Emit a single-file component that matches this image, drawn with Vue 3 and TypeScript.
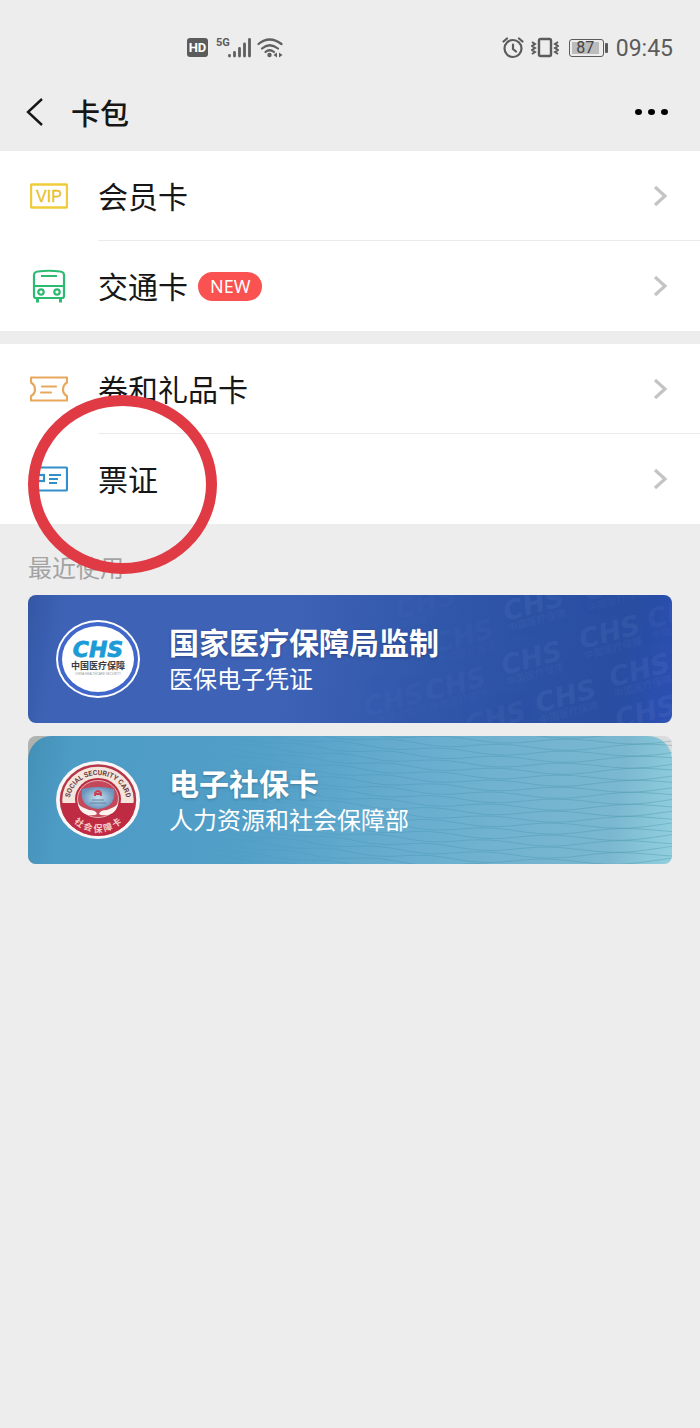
<script setup lang="ts">
interface Row {
  id: string
  label: string
  badge?: string
  marked?: boolean
}

const groups: Row[][] = [
  [
    { id: 'vip', label: '会员卡' },
    { id: 'bus', label: '交通卡', badge: 'NEW' },
  ],
  [
    { id: 'coupon', label: '券和礼品卡' },
    { id: 'ticket', label: '票证', marked: true },
  ],
]

// Watermark positions and strength across the medical insurance card
const marks: [number, number, number][] = [
  [370, 24, 0.4], [478, 26, 0.9], [558, 6, 0.7], [408, 58, 0.5], [476, 80, 0.9],
  [554, 54, 1], [584, 92, 1], [400, 106, 0.7], [338, 122, 0.4], [440, 140, 0.7],
  [510, 118, 1], [590, 134, 1], [622, 34, 0.7],
]

// Interlaced wave lines that open up towards the right edge
function wave(index: number): string {
  const base = -60 + index * 6
  const side = index % 2 ? 1 : -1
  const points: string[] = []
  for (let x = 150; x <= 648; x += 6) {
    const t = (x - 150) / 498
    const y = base + t * 74 - 46 * t * t + side * (1 + 2 * t) * Math.sin(x / (8 + 5 * t) + index * 0.05)
    points.push(`${x} ${y.toFixed(1)}`)
  }
  return 'M' + points.join('L')
}
const waves = Array.from({ length: 34 }, (_, i) => wave(i))
</script>

<template>
  <div class="page">
    <div class="status">
      <div class="status-left">
        <svg width="21" height="20" viewBox="0 0 21 20" aria-hidden="true">
          <rect width="21" height="19" rx="3" fill="#5b5b5b" />
          <text x="10.5" y="14" text-anchor="middle" class="hd-text">HD</text>
        </svg>
        <span class="net">5G</span>
        <svg width="24" height="20" viewBox="0 0 24 20" aria-hidden="true">
          <path d="M1.500 17.500v.5M6.500 14.500v3.500M11.500 10.500v7.500M16.500 6v12M21.500 1.500v16.500" stroke="#5f5f5f" stroke-width="2.800" stroke-linecap="round" />
        </svg>
        <svg class="wifi" width="27" height="20" viewBox="0 0 27 20" fill="none" stroke="#5f5f5f" stroke-width="2.2" stroke-linecap="round" aria-hidden="true">
          <path d="M1.5 6Q12.500 -3 24.500 6M5 10.500Q12.500 4 21 10.500M8.500 14Q12.500 10.500 17 14" />
          <circle cx="12.500" cy="17" r="2.200" fill="#5f5f5f" stroke="none" />
          <path d="M20 14.500v5l-3.500-2.500zM22 14.500v5l3.500-2.500z" fill="#5f5f5f" stroke="none" />
        </svg>
      </div>
      <div class="status-right">
        <svg width="22" height="22" viewBox="0 0 22 22" fill="none" stroke="#5b5b5b" stroke-width="2.2" stroke-linecap="round" aria-hidden="true">
          <circle cx="11" cy="11.500" r="8.500" />
          <path d="M1.500 4.500 5 1.500M20.500 4.500 17 1.500M11 7.500v4.500l3 2.500" />
        </svg>
        <svg width="28" height="22" viewBox="0 0 28 22" fill="none" stroke="#5b5b5b" stroke-width="2.400" aria-hidden="true">
          <rect x="8" y="2" width="12" height="17" rx="1.500" />
          <path d="m1 5 3 2-3 2 3 2-3 2 3 2-3 2M27 5l-3 2 3 2-3 2 3 2-3 2 3 2" stroke-width="2" />
        </svg>
        <span class="battery"><span class="level">87</span></span>
        <time class="clock">09:45</time>
      </div>
    </div>

    <header class="bar">
      <button class="back" type="button" aria-label="返回">
        <svg width="18" height="28" viewBox="0 0 18 28" fill="none" stroke="#161616" stroke-width="2.400" aria-hidden="true">
          <path d="M16 1 2 14l14 13" />
        </svg>
      </button>
      <h1>卡包</h1>
      <button class="more" type="button" aria-label="更多">
        <i></i><i></i><i></i>
      </button>
    </header>

    <main>
      <ul v-for="(group, g) in groups" :key="g" class="group">
        <li v-for="row in group" :key="row.id" class="item">
          <button class="row" type="button">
            <svg class="icon" width="38" height="36" viewBox="0 0 38 36" fill="none" aria-hidden="true">
              <g v-if="row.id === 'vip'">
                <rect x="1" y="6.500" width="36" height="23" rx="1" stroke="#f0cc3c" stroke-width="2.400" />
                <text x="19" y="24" text-anchor="middle" class="vip-text">VIP</text>
              </g>
              <g v-else-if="row.id === 'bus'" stroke="#2dbb72" stroke-width="2.200">
                <path d="M4 28V7q0-3 4-3.500 11-1.500 22 0 4 .5 4 3.500v21q0 2-2 2H6q-2 0-2-2zM4 18h30M11 8h16" />
                <path d="M7.500 30v4.500M30.500 30v4.500" stroke-width="3" />
                <circle cx="11" cy="24" r="2.700" />
                <circle cx="27" cy="24" r="2.700" />
              </g>
              <g v-else-if="row.id === 'coupon'" stroke="#e8a85c" stroke-width="2.200" stroke-linejoin="round">
                <path d="M1 6.500h36v5q-4 2.500-4 7t4 6.500v4.500H1V25q4-2 4-6.500t-4-7z" />
                <path d="M12 15.500h14M11 21.500h10" stroke-linecap="round" />
              </g>
              <g v-else stroke="#338fca" stroke-width="2.200">
                <rect x="1" y="6.500" width="36" height="23" rx="1" />
                <rect x="6" y="14" width="8" height="6" />
                <path d="M19 14h12M19 18h9M19 22h8" />
              </g>
            </svg>
            <span class="label">{{ row.label }}</span>
            <span v-if="row.badge" class="badge">{{ row.badge }}</span>
            <svg class="chevron" width="15" height="22" viewBox="0 0 15 22" fill="none" stroke="#c4c4c4" stroke-width="3.200" aria-hidden="true">
              <path d="m2 2 10 9-10 9" />
            </svg>
          </button>
          <span v-if="row.marked" class="ring" aria-hidden="true"></span>
        </li>
      </ul>

      <section class="recent">
        <h2>最近使用</h2>
        <a class="card medical" href="#medical">
          <svg class="texture" viewBox="0 0 644 128" preserveAspectRatio="xMaxYMid slice" aria-hidden="true">
            <g v-for="(m, i) in marks" :key="i" :transform="`translate(${m[0]} ${m[1]}) rotate(-15)`" :opacity="m[2]">
              <text class="mark">CHS</text>
              <text class="mark-sub" y="11">中国医疗保障</text>
            </g>
          </svg>
          <svg class="logo" width="84" height="78" viewBox="0 0 84 78" aria-hidden="true">
            <ellipse cx="42" cy="39" rx="42" ry="39" fill="#fff" />
            <ellipse cx="42" cy="39" rx="40" ry="37" fill="#4167ca" />
            <ellipse cx="42" cy="39" rx="36" ry="33" fill="#fff" />
            <text x="42" y="37" text-anchor="middle" class="chs">CHS</text>
            <text x="42" y="49" text-anchor="middle" class="chs-cn">中国医疗保障</text>
            <text x="42" y="55" text-anchor="middle" class="chs-en">CHINA HEALTHCARE SECURITY</text>
          </svg>
          <span class="text">
            <strong>国家医疗保障局监制</strong>
            <span>医保电子凭证</span>
          </span>
        </a>
        <a class="card social" href="#social">
          <span class="sheet">
            <svg class="texture" viewBox="0 0 644 128" preserveAspectRatio="xMaxYMid slice" aria-hidden="true">
              <defs>
                <linearGradient id="fade" gradientUnits="userSpaceOnUse" x1="150" y1="0" x2="648" y2="0">
                  <stop offset="0" stop-color="#2f86a8" stop-opacity="0" />
                  <stop offset="0.400" stop-color="#2f86a8" stop-opacity="0.300" />
                  <stop offset="1" stop-color="#3f8fa4" stop-opacity="0.450" />
                </linearGradient>
              </defs>
              <path v-for="(d, i) in waves" :key="i" :d="d" fill="none" stroke="url(#fade)" stroke-width="0.800" />
            </svg>
          </span>
          <svg class="logo" width="84" height="78" viewBox="0 0 84 78" aria-hidden="true">
            <defs>
              <path id="arc-top" d="M14 46A28.500 27 0 1 1 70 46" />
              <path id="arc-bottom" d="M9 40A33 31 0 0 0 75 40" />
              <radialGradient id="globe">
                <stop offset="0" stop-color="#c6e2f0" />
                <stop offset="1" stop-color="#6b94bd" />
              </radialGradient>
            </defs>
            <ellipse cx="42" cy="39" rx="42" ry="39" fill="#fbf6f5" />
            <ellipse cx="42" cy="39" rx="37" ry="34.500" fill="#f5e6dd" stroke="#b4374b" stroke-width="2.500" />
            <path d="M5 42h74A37 33 0 0 1 5 42z" fill="#bf2b42" />
            <ellipse cx="42" cy="38" rx="23" ry="21" fill="#b92c42" />
            <ellipse cx="42" cy="38" rx="20.500" ry="18.500" fill="#c4475a" stroke="#edd0cf" stroke-width="0.800" />
            <path d="M26 28q16-4 32 0 3 18-16 20-19-2-16-20z" fill="url(#globe)" />
            <path d="M22 38q-1 5 4 8l7 3q7 0 8 4-2 2-9 1-11-3-10-16zM62 38q1 5-4 8l-7 3q-7 0-8 4 2 2 9 1 11-3 10-16z" fill="#fff3f0" />
            <path d="M39 35v-3q3-4 6 0v3M39 33h6" fill="none" stroke="#cf3e50" stroke-width="1.800" />
            <path d="M36 39h12M34 42h16" stroke="#64829f" stroke-width="1" />
            <text class="seal-en" text-anchor="middle"><textPath href="#arc-top" startOffset="50%">SOCIAL SECURITY CARD</textPath></text>
            <text class="seal-cn" text-anchor="middle"><textPath href="#arc-bottom" startOffset="50%">社 会 保 障 卡</textPath></text>
          </svg>
          <span class="text">
            <strong>电子社保卡</strong>
            <span>人力资源和社会保障部</span>
          </span>
        </a>
      </section>
    </main>
  </div>
</template>

<style>
body {
  margin: 0;
  background: #ededed;
}
</style>

<style scoped>
.page {
  min-height: 100vh;
  background: #ededed;
  color: #161616;
  font-family: "Noto Sans CJK SC", "Noto Sans", sans-serif;
}
button {
  margin: 0;
  padding: 0;
  border: 0;
  background: none;
  color: inherit;
  font: inherit;
  cursor: pointer;
}
svg {
  display: block;
  flex: none;
}
.status {
  display: flex;
  justify-content: space-between;
  align-items: center;
  height: 27px;
  padding: 34px 27px 14px 187px;
  color: #5b5b5b;
  font-family: Roboto, sans-serif;
}
.status-left,
.status-right {
  display: flex;
  align-items: center;
}
.hd-text {
  fill: #fff;
  font: bold 13px Roboto, sans-serif;
}
.net {
  align-self: flex-start;
  margin-left: 8px;
  font-size: 11px;
  font-weight: 700;
  line-height: 10px;
}
.status-left .net + svg {
  margin-left: -2px;
}
.status-left .wifi {
  margin-left: 5px;
}
.status-right {
  gap: 7px;
}
.battery {
  position: relative;
  box-sizing: border-box;
  width: 35px;
  height: 18px;
  margin: 0 5px 0 3px;
  padding: 2px;
  border: 1px solid #5b5b5b;
  border-radius: 3px;
}
.battery::after {
  content: "";
  position: absolute;
  top: 3px;
  right: -5px;
  width: 3px;
  height: 10px;
  border-radius: 1px;
  background: #5b5b5b;
}
.level {
  display: block;
  width: 27px;
  background: #bcbcbc;
  color: #444;
  font-size: 16px;
  line-height: 12px;
  text-align: center;
}
.clock {
  padding-top: 2px;
  font-size: 23px;
  line-height: 27px;
}
.bar {
  display: flex;
  align-items: center;
  height: 74px;
  padding: 0 32px 2px 26px;
}
.bar h1 {
  flex: 1;
  margin: 0 0 0 27px;
  font-size: 29px;
  font-weight: 500;
  line-height: 40px;
}
.more {
  display: flex;
  gap: 6px;
}
.more i {
  width: 7px;
  height: 6px;
  border-radius: 50%;
  background: #000;
}
.group {
  margin: 0 0 13px;
  padding: 0;
  list-style: none;
  background: #fff;
}
.group:last-of-type {
  margin-bottom: 0;
}
.item {
  position: relative;
}
.item + .item::before {
  content: "";
  position: absolute;
  top: -1px;
  right: 0;
  left: 98px;
  height: 1px;
  background: #ebebeb;
}
.row {
  display: flex;
  align-items: center;
  width: 100%;
  height: 90px;
  padding: 0 32px 0 30px;
  text-align: left;
}
.label {
  margin-left: 30px;
  padding-bottom: 3px;
  font-size: 30px;
  line-height: 40px;
}
.badge {
  margin-left: 10px;
  padding: 0 12px;
  border-radius: 15px;
  background: #fa5151;
  color: #fff;
  font: 18px/29px "Noto Sans", sans-serif;
}
.chevron {
  margin-left: auto;
}
.vip-text {
  fill: #e8bf2c;
  stroke: #e8bf2c;
  stroke-width: 0.3px;
  font: 16px "Liberation Sans", sans-serif;
}
.ring {
  position: absolute;
  top: -39px;
  left: 28px;
  z-index: 1;
  box-sizing: border-box;
  width: 189px;
  height: 179px;
  border: 11px solid #e03a45;
  border-radius: 50%;
  pointer-events: none;
}
.recent {
  display: flex;
  flex-direction: column;
  gap: 13px;
  padding: 28px;
}
.recent h2 {
  margin: 0;
  color: #a3a3a3;
  font-size: 24px;
  font-weight: 400;
  line-height: 30px;
}
.card {
  position: relative;
  display: flex;
  align-items: center;
  gap: 29px;
  min-height: 128px;
  padding-left: 28px;
  overflow: hidden;
  border-radius: 8px;
  color: #fff;
  text-decoration: none;
}
.medical {
  background: linear-gradient(100deg, #3456a4 0%, #3e63b6 6%, #3d62b6 40%, #2f56a9 65%, #284da1 91%, #2b50b4 100%);
}
.social {
  background: linear-gradient(90deg, #aeb3b0, #dcdcdc);
}
.sheet {
  position: absolute;
  inset: 0;
  border-radius: 24px 24px 0 0;
  background: linear-gradient(100deg, #438fb6 0%, #4d9cc6 7%, #529fc8 35%, #69aecf 60%, #7bb8d0 90%, #92d0df 100%);
}
.texture {
  position: absolute;
  inset: 0;
  width: 100%;
  height: 100%;
}
.mark {
  fill: #7893d8;
  fill-opacity: 0.15;
  font: italic bold 27px "DejaVu Sans", sans-serif;
}
.mark-sub {
  fill: #7893d8;
  fill-opacity: 0.1;
  font: bold 10px "Noto Sans CJK SC", sans-serif;
}
.logo {
  position: relative;
}
.text {
  position: relative;
  display: flex;
  flex-direction: column;
}
.text strong {
  font-size: 30px;
  font-weight: 700;
  line-height: 38px;
  text-shadow: 0 1px 3px rgba(0, 0, 0, 0.25);
}
.text span {
  font-size: 24px;
  line-height: 36px;
}
.chs {
  fill: #1c9bd6;
  stroke: #1c9bd6;
  stroke-width: 0.8px;
  font: italic bold 22px "DejaVu Sans", sans-serif;
}
.chs-cn {
  fill: #3c3c3c;
  font: bold 9px "Noto Sans CJK SC", sans-serif;
}
.chs-en {
  fill: #999;
  font: 3px "Liberation Sans", sans-serif;
}
.seal-en {
  fill: #6b3b3e;
  font: bold 7px Roboto, sans-serif;
}
.seal-cn {
  fill: #f3cfc8;
  font: bold 9px "Noto Sans CJK SC", sans-serif;
}
</style>
